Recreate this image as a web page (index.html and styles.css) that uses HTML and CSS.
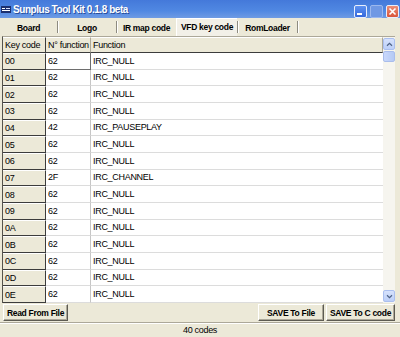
FILE: index.html
```html
<!DOCTYPE html>
<html lang="en">
<head>
    <meta charset="UTF-8">
    <title>Sunplus Tool Kit</title>
    <link rel="stylesheet" href="styles.css">
</head>
<body>

<div class="window">
    <div class="titlebar">
        <svg class="appicon" viewBox="0 0 10 9">
            <rect x="0" y="1" width="10" height="7" fill="#1c2f6e"/>
            <rect x="1" y="3" width="3" height="1" fill="#fff"/>
            <rect x="5" y="3" width="4" height="1" fill="#d8e0ff"/>
            <rect x="1" y="5" width="8" height="1" fill="#fff"/>
        </svg>
        <span class="title">Sunplus Tool Kit 0.1.8 beta</span>
        <div class="controls">
            <span class="ctl min"><i></i></span>
            <span class="ctl max"></span>
            <span class="ctl close">
                <svg viewBox="0 0 11 11"><path d="M2.5 2.5 L8.5 8.5 M8.5 2.5 L2.5 8.5" stroke="#fff" stroke-width="1.6"/></svg>
            </span>
        </div>
    </div>

    <div class="tabs">
        <div class="tab t1">Board</div><i class="sep"></i>
        <div class="tab t2">Logo</div><i class="sep"></i>
        <div class="tab t3">IR map code</div>
        <div class="tab t4 active">VFD key code</div><i class="sep"></i>
        <div class="tab t5">RomLoader</div><i class="sep"></i>
    </div>

    <div class="page">
        <div class="grid">
            <div class="rows">
                <div class="row head">
                    <div class="c key">Key code</div>
                    <div class="c fn">N° function</div>
                    <div class="c name">Function</div>
                </div>
                <div class="row"><div class="c key">00</div><div class="c fn focus">62</div><div class="c name">IRC_NULL</div></div>
                <div class="row"><div class="c key">01</div><div class="c fn">62</div><div class="c name">IRC_NULL</div></div>
                <div class="row"><div class="c key">02</div><div class="c fn">62</div><div class="c name">IRC_NULL</div></div>
                <div class="row"><div class="c key">03</div><div class="c fn">62</div><div class="c name">IRC_NULL</div></div>
                <div class="row"><div class="c key">04</div><div class="c fn">42</div><div class="c name">IRC_PAUSEPLAY</div></div>
                <div class="row"><div class="c key">05</div><div class="c fn">62</div><div class="c name">IRC_NULL</div></div>
                <div class="row"><div class="c key">06</div><div class="c fn">62</div><div class="c name">IRC_NULL</div></div>
                <div class="row"><div class="c key">07</div><div class="c fn">2F</div><div class="c name">IRC_CHANNEL</div></div>
                <div class="row"><div class="c key">08</div><div class="c fn">62</div><div class="c name">IRC_NULL</div></div>
                <div class="row"><div class="c key">09</div><div class="c fn">62</div><div class="c name">IRC_NULL</div></div>
                <div class="row"><div class="c key">0A</div><div class="c fn">62</div><div class="c name">IRC_NULL</div></div>
                <div class="row"><div class="c key">0B</div><div class="c fn">62</div><div class="c name">IRC_NULL</div></div>
                <div class="row"><div class="c key">0C</div><div class="c fn">62</div><div class="c name">IRC_NULL</div></div>
                <div class="row"><div class="c key">0D</div><div class="c fn">62</div><div class="c name">IRC_NULL</div></div>
                <div class="row"><div class="c key">0E</div><div class="c fn">62</div><div class="c name">IRC_NULL</div></div>
            </div>
            <div class="scroll">
                <div class="sbtn">
                    <svg viewBox="0 0 8 6"><path d="M1 4.5 L4 1.5 L7 4.5" fill="none" stroke="#4d6185" stroke-width="1.4"/></svg>
                </div>
                <div class="thumb"></div>
                <div class="track"></div>
                <div class="sbtn">
                    <svg viewBox="0 0 8 6"><path d="M1 1.5 L4 4.5 L7 1.5" fill="none" stroke="#4d6185" stroke-width="1.4"/></svg>
                </div>
            </div>
        </div>

        <div class="buttons">
            <div class="btn read">Read From File</div>
            <div class="spacer"></div>
            <div class="btn save">SAVE To File</div>
            <div class="btn savec">SAVE To C code</div>
        </div>
    </div>

    <div class="status">40 codes</div>
</div>

</body>
</html>
```

FILE: styles.css
```css
*{
    margin: 0;
    padding: 0;
    box-sizing: border-box;
}
body{
    width: 400px;
    height: 337px;
    overflow: hidden;
    font-family: "Liberation Sans", Arial, sans-serif;
    font-size: 9px;
    letter-spacing: -0.3px;
    color: #000;
}
.window{
    width: 400px;
    height: 337px;
    background: #ece9d8;
    display: flex;
    flex-direction: column;
}

/* title bar */
.titlebar{
    height: 18px;
    display: flex;
    align-items: center;
    padding-left: 1px;
    background: linear-gradient(to bottom, #4479da 0%, #5088e2 60%, #6e9be4 100%);
}
.appicon{
    width: 10px;
    height: 9px;
    margin-right: 2px;
    margin-top: 1px;
}
.title{
    flex: 1;
    color: #fff;
    font-weight: bold;
    font-size: 10px;
    letter-spacing: -0.45px;
    text-shadow: 1px 1px 0 #2a4f9e;
}
.controls{
    display: flex;
    gap: 3px;
    padding-right: 1px;
    align-self: flex-end;
}
.ctl{
    width: 13px;
    height: 13px;
    border: 1px solid #e8eefc;
    border-radius: 2px;
    display: flex;
    align-items: center;
    justify-content: center;
}
.min{
    background: linear-gradient(to bottom, #5e92f0, #3468dc);
    align-items: flex-end;
    padding-bottom: 2px;
}
.min i{
    display: block;
    width: 5px;
    height: 2px;
    background: #fff;
    margin-right: 2px;
}
.max{
    background: #6f98e4;
    border-color: #9cb8ee;
}
.close{
    background: linear-gradient(to bottom, #ec8f78, #d9553a);
}
.close svg{
    width: 11px;
    height: 11px;
}

/* tabs */
.tabs{
    height: 18px;
    display: flex;
    align-items: flex-end;
}
.tab{
    height: 16px;
    font-weight: bold;
    font-size: 8.5px;
    letter-spacing: -0.3px;
    display: flex;
    align-items: center;
    justify-content: center;
    padding-bottom: 1px;
}
.t1{ width: 57px; }
.t2{ width: 58px; }
.t3{ width: 59px; }
.t4{ width: 61px; }
.t5{ width: 59px; }
.tab.active{
    height: 18px;
    background: #f2f0e8;
    border-top: 1px solid #fff;
    border-left: 1px solid #fff;
    padding-bottom: 2px;
}
.sep{
    display: block;
    width: 1px;
    height: 12px;
    margin-bottom: 3px;
    background: #8d8b80;
    box-shadow: 1px 0 0 #fff;
}

/* table */
.page{
    flex: 1;
    display: flex;
    flex-direction: column;
    padding: 0 5px 0 2px;
}
.grid{
    height: 267px;
    display: flex;
    border-left: 1px solid #55534c;
    border-top: 1px solid #aca899;
}
.rows{
    flex: 1;
    display: flex;
    flex-direction: column;
    background: #fff;
}
.row{
    display: flex;
    height: 16.667px;
}
.row.head{
    height: 16px;
}
.c{
    display: flex;
    align-items: center;
    padding-left: 2px;
    white-space: nowrap;
    border-bottom: 1px solid #dcdcdc;
}
.key{
    width: 43px;
    background: #ece9d8;
    border-right: 1px solid #3c3c3c;
    border-bottom: 1px solid #3c3c3c;
    border-top: 1px solid #fff;
}
.fn{
    width: 45px;
    border-right: 1px solid #c6c6c6;
}
.name{
    flex: 1;
}
.head .c{
    background: #ece9d8;
    border-top: 1px solid #fff;
    border-bottom: 1px solid #3c3c3c;
}
.head .fn, .head .name{
    border-right: 1px solid #aca899;
}
.fn.focus{
    border-right: 1px solid #6e6e6e;
    border-bottom: 1px solid #6e6e6e;
}

/* scrollbar */
.scroll{
    width: 12px;
    background: #f6f5ef;
    display: flex;
    flex-direction: column;
    padding: 1px 0 1px;
}
.sbtn{
    height: 12px;
    background: linear-gradient(to bottom, #d6e2fc, #bccff8);
    border: 1px solid #aabfef;
    border-radius: 2px;
    display: flex;
    align-items: center;
    justify-content: center;
}
.sbtn svg{
    width: 7px;
    height: 5px;
}
.thumb{
    height: 11px;
    margin-top: 1px;
    background: linear-gradient(to right, #c9d8fb, #b5c9f5);
    border: 1px solid #a9bdec;
    border-radius: 2px;
}
.track{
    flex: 1;
}

/* buttons */
.buttons{
    height: 19px;
    display: flex;
    gap: 2px;
    padding-top: 1px;
}
.spacer{
    flex: 1;
}
.btn{
    height: 17px;
    display: flex;
    align-items: center;
    justify-content: center;
    font-weight: bold;
    font-size: 8.5px;
    letter-spacing: -0.3px;
    background: #ece9d8;
    border: 1px solid;
    border-color: #fff #5d5b52 #5d5b52 #fff;
    box-shadow: inset -1px -1px 0 #aca899;
}
.read{
    width: 65px;
    margin-left: 1px;
}
.save{
    width: 66px;
}
.savec{
    width: 69px;
}

/* status bar */
.status{
    height: 15px;
    border-top: 1px solid #aca899;
    box-shadow: inset 0 1px 0 #fff;
    display: flex;
    align-items: center;
    justify-content: center;
}
```
